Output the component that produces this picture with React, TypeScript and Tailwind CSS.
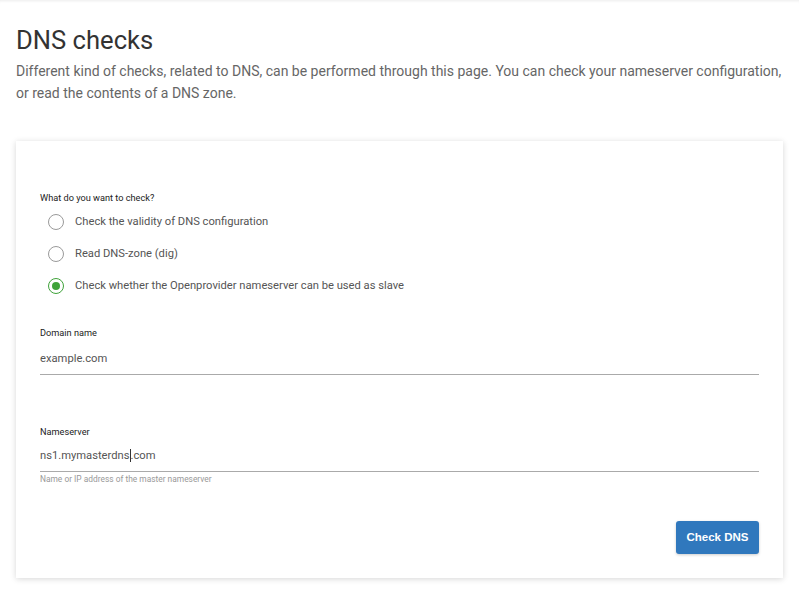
import React from 'react';

const options = [
  'Check the validity of DNS configuration',
  'Read DNS-zone (dig)',
  'Check whether the Openprovider nameserver can be used as slave',
];

function Radio({ checked }: { checked: boolean }) {
  return (
    <span
      className={
        checked
          ? 'flex h-4 w-4 shrink-0 items-center justify-center rounded-full border border-[#3fa33a] bg-white'
          : 'flex h-4 w-4 shrink-0 items-center justify-center rounded-full border border-[#9a9a9a] bg-white'
      }
    >
      {checked && <span className="h-2 w-2 rounded-full bg-[#3fa33a]" />}
    </span>
  );
}

export default function App() {
  return (
    <div className="min-h-[594px] w-[799px] bg-white font-['Roboto',sans-serif] shadow-[inset_0_3px_3px_-2px_rgba(0,0,0,0.08)]">
      <div className="px-4 pt-[24px]">
        <h1 className="text-[25.6px] leading-[32px] font-normal text-[#333]">DNS checks</h1>
        <p className="mt-[4px] text-[14px] leading-[22px] text-[#666]">
          Different kind of checks, related to DNS, can be performed through this page. You can check your nameserver configuration,
          or read the contents of a DNS zone.
        </p>

        <div className="mt-[37px] w-[767px] bg-white px-6 pt-[51px] pb-[24px] shadow-[0_1px_6px_rgba(0,0,0,0.16)]">
          <div className="text-[9.2px] leading-[12px] text-[#222]">What do you want to check?</div>
          <div className="mt-[2px] flex flex-col">
            {options.map((label, i) => (
              <label key={label} className="flex h-[32px] items-center gap-[11px] pl-2">
                <Radio checked={i === 2} />
                <span className="text-[11.2px] text-[#555]">{label}</span>
              </label>
            ))}
          </div>

          <div className="mt-[25px]">
            <div className="text-[9.2px] leading-[12px] text-[#222]">Domain name</div>
            <div className="mt-[13px] border-b border-[#aaa] pb-[8px] text-[11.2px] leading-[14px] text-[#555]">example.com</div>
          </div>

          <div className="mt-[51px]">
            <div className="text-[9.2px] leading-[12px] text-[#222]">Nameserver</div>
            <div className="mt-[11px] border-b border-[#aaa] pb-[8px] text-[11.2px] leading-[14px] text-[#555]">
              ns1.mymasterdns<span className="border-l border-[#333]">.com</span>
            </div>
            <div className="mt-[2px] text-[8.4px] leading-[10px] text-[#999]">Name or IP address of the master nameserver</div>
          </div>

          <div className="mt-[37px] flex justify-end">
            <button className="h-[33px] w-[83px] rounded-[3px] bg-[#3078bd] font-['Liberation_Sans',Arial,sans-serif] text-[11.5px] font-bold text-white shadow-[0_1px_3px_rgba(0,0,0,0.2)]">
              Check DNS
            </button>
          </div>
        </div>
      </div>
    </div>
  );
}
